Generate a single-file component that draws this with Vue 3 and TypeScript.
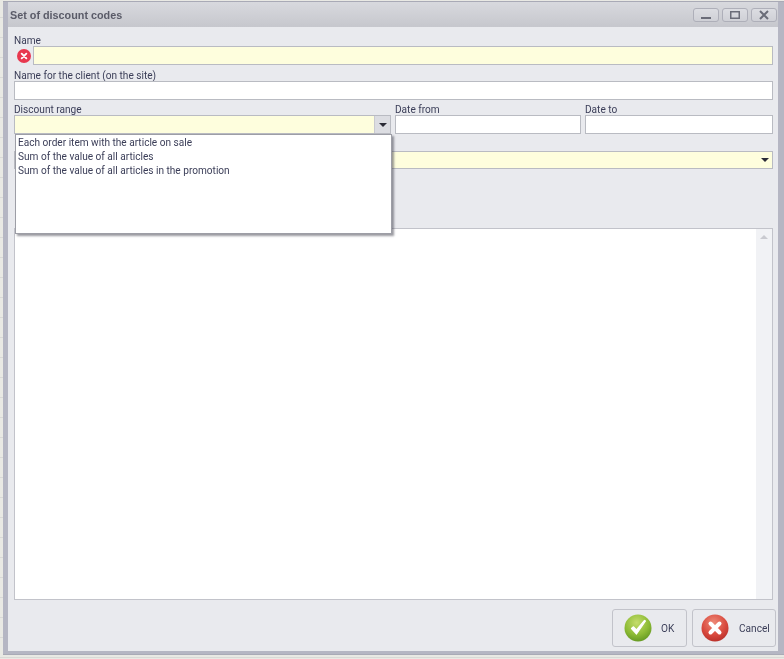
<template>
  <div class="desktop">
    <div class="window">
      <header class="titlebar">
        <span class="titlebar__text">Set of discount codes</span>
        <div class="titlebar__buttons">
          <button class="win-btn" type="button" aria-label="Minimize">
            <svg width="14" height="10" viewBox="0 0 14 10"><rect x="2" y="7" width="10" height="2" fill="#6a6c78" /></svg>
          </button>
          <button class="win-btn" type="button" aria-label="Maximize">
            <svg width="14" height="10" viewBox="0 0 14 10"><rect x="2.75" y="1.75" width="8.5" height="6.5" fill="none" stroke="#6a6c78" stroke-width="1.5" /></svg>
          </button>
          <button class="win-btn" type="button" aria-label="Close">
            <svg width="14" height="10" viewBox="0 0 14 10"><path d="M3 1l8 8M11 1l-8 8" stroke="#6a6c78" stroke-width="2" fill="none" /></svg>
          </button>
        </div>
      </header>

      <main class="body">
        <form class="form" @submit.prevent>
          <div class="field">
            <label class="field__label">Name</label>
            <div class="name-row">
              <svg class="error-icon" width="14" height="14" viewBox="0 0 15 15">
                <circle cx="7.5" cy="7.5" r="7.5" fill="#e8384f" />
                <path d="M5 5l5 5M10 5l-5 5" stroke="#fff" stroke-width="2" stroke-linecap="round" />
              </svg>
              <div class="input input--required name-row__input"></div>
            </div>
          </div>

          <div class="field field--client">
            <label class="field__label">Name for the client (on the site)</label>
            <div class="input"></div>
          </div>

          <div class="range-row">
            <div class="field field--range">
              <label class="field__label">Discount range</label>
              <div class="input input--required combo">
                <span class="combo__btn"><i class="caret"></i></span>
              </div>
              <ul class="popup">
                <li v-for="item in rangeOptions" :key="item">{{ item }}</li>
              </ul>
            </div>
            <div class="field">
              <label class="field__label">Date from</label>
              <div class="input"></div>
            </div>
            <div class="field">
              <label class="field__label">Date to</label>
              <div class="input"></div>
            </div>
          </div>

          <div class="input input--required combo type-row">
            <span class="combo__arrow"><i class="caret"></i></span>
          </div>

          <div class="memo">
            <div class="memo__scroll"><i class="caret caret--up"></i></div>
          </div>
        </form>

        <footer class="actions">
          <button class="action-btn action-btn--ok" type="button">
            <svg width="28" height="28" viewBox="0 0 28 28">
              <defs>
                <radialGradient id="okFill" cx="45%" cy="30%" r="75%">
                  <stop offset="0" stop-color="#c5dd6c" />
                  <stop offset="0.6" stop-color="#8dbb35" />
                  <stop offset="1" stop-color="#5f9420" />
                </radialGradient>
              </defs>
              <circle cx="14" cy="14" r="13.5" fill="url(#okFill)" />
              <path d="M7.5 14.5l5 5.5 9-13-1-.6-8 9.6-3-3.2z" fill="#fff" stroke="#fff" stroke-width="1.2" stroke-linejoin="round" />
            </svg>
            <span>OK</span>
          </button>
          <button class="action-btn action-btn--cancel" type="button">
            <svg width="28" height="28" viewBox="0 0 28 28">
              <defs>
                <radialGradient id="cancelFill" cx="45%" cy="30%" r="75%">
                  <stop offset="0" stop-color="#ee8a78" />
                  <stop offset="0.6" stop-color="#d94a3e" />
                  <stop offset="1" stop-color="#b52d28" />
                </radialGradient>
              </defs>
              <circle cx="14" cy="14" r="13.5" fill="url(#cancelFill)" />
              <path d="M9.5 9.5l9 9M18.5 9.5l-9 9" stroke="#fff" stroke-width="4" stroke-linecap="round" />
            </svg>
            <span>Cancel</span>
          </button>
        </footer>
      </main>
    </div>
  </div>
</template>

<script setup lang="ts">
const rangeOptions: string[] = [
  'Each order item with the article on sale',
  'Sum of the value of all articles',
  'Sum of the value of all articles in the promotion',
]
</script>

<style>
html,
body {
  margin: 0;
  background: #e9e9e4;
}
</style>

<style scoped>
.desktop {
  box-sizing: border-box;
  width: 784px;
  height: 659px;
  padding: 1px 0 4px 3px;
  overflow: hidden;
  background: repeating-linear-gradient(180deg, #e9e9e4 0 17px, #d9d9d6 17px 18px, #e9e9e4 18px 20px);
  font-family: Roboto, "Liberation Sans", sans-serif;
}

.window {
  box-sizing: border-box;
  display: flex;
  flex-direction: column;
  height: 100%;
  padding: 0 6px 3px 5px;
  background: #b5b6c3;
  border-top: 1px solid #a9aab6;
  border-bottom: 1px solid #a9aab6;
  filter: blur(0.4px);
}

.titlebar {
  flex: none;
  display: flex;
  align-items: center;
  justify-content: space-between;
  height: 25px;
  padding: 0 1px 0 2px;
  background: linear-gradient(180deg, #d8d9de, #c6c7cd);
}

.titlebar__text {
  color: #5a5b68;
  font-family: "Liberation Sans", sans-serif;
  font-size: 10.8px;
  font-weight: 700;
}

.titlebar__buttons {
  display: flex;
  gap: 3px;
}

.win-btn {
  display: flex;
  align-items: center;
  justify-content: center;
  width: 26px;
  height: 14px;
  padding: 0;
  border: 1px solid #aeafb9;
  border-radius: 3px;
  background: linear-gradient(180deg, #dcdde2, #cfd0d6);
}

.body {
  flex: 1;
  min-height: 0;
  display: flex;
  flex-direction: column;
  padding: 7px 5px 4px 6px;
  background: #e9eaee;
}

.form {
  flex: 1;
  min-height: 0;
  display: flex;
  flex-direction: column;
}

.field {
  position: relative;
  display: flex;
  flex-direction: column;
}

.field__label {
  height: 12px;
  color: #3b3e58;
  font-size: 10.1px;
  line-height: 14px;
  white-space: nowrap;
}

.name-row {
  display: flex;
  align-items: center;
  gap: 2px;
}

.error-icon {
  flex: none;
  margin-left: 3px;
}

.name-row__input {
  flex: 1;
}

.input {
  box-sizing: border-box;
  height: 19px;
  border: 1px solid #b9bbc2;
  background: #fff;
}

.input--required {
  background: #fefedd;
}

.field--client {
  margin-top: 4px;
}

.range-row {
  display: grid;
  grid-template-columns: 377px 186px 188px;
  gap: 4px;
  margin-top: 3px;
}

.combo {
  display: flex;
  justify-content: flex-end;
}

.combo__btn {
  display: flex;
  align-items: center;
  justify-content: center;
  width: 15px;
  background: #dcdde2;
  border-left: 1px solid #c9cad0;
}

.combo__arrow {
  display: flex;
  align-items: center;
  justify-content: center;
  width: 15px;
}

.caret {
  width: 0;
  height: 0;
  border-left: 4px solid transparent;
  border-right: 4px solid transparent;
  border-top: 4px solid #2a2b36;
}

.caret--up {
  border-top: 0;
  border-bottom: 4px solid #c9cad0;
}

.popup {
  position: absolute;
  z-index: 2;
  top: 31px;
  left: 1px;
  box-sizing: border-box;
  width: 377px;
  height: 100px;
  margin: 0;
  padding: 1px 2px;
  list-style: none;
  background: #fff;
  border: 1px solid #9d9ea6;
  box-shadow: 2px 2px 2px rgba(70, 70, 80, 0.55);
}

.popup li {
  height: 14px;
  color: #3b3e58;
  font-size: 10.1px;
  line-height: 14px;
  white-space: nowrap;
}

.type-row {
  flex: none;
  height: 18px;
  margin-top: 17px;
}

.memo {
  flex: 1;
  min-height: 0;
  display: flex;
  justify-content: flex-end;
  margin-top: 59px;
  background: #fff;
  border: 1px solid #c2c3ca;
}

.memo__scroll {
  box-sizing: border-box;
  display: flex;
  justify-content: center;
  width: 16px;
  padding-top: 6px;
  background: #f1f2f5;
}

.actions {
  flex: none;
  display: flex;
  justify-content: flex-end;
  gap: 5px;
  margin: 9px -3px 0 0;
}

.action-btn {
  box-sizing: border-box;
  display: flex;
  align-items: center;
  height: 38px;
  padding: 0 0 0 11px;
  border: 1px solid #c2c3ca;
  border-radius: 3px;
  background: #e9eaee;
  color: #3b3e58;
  font-family: Roboto, "Liberation Sans", sans-serif;
  font-size: 10.1px;
}

.action-btn--ok {
  width: 75px;
  gap: 9px;
}

.action-btn--cancel {
  width: 84px;
  gap: 10px;
  padding-left: 8px;
}
</style>
